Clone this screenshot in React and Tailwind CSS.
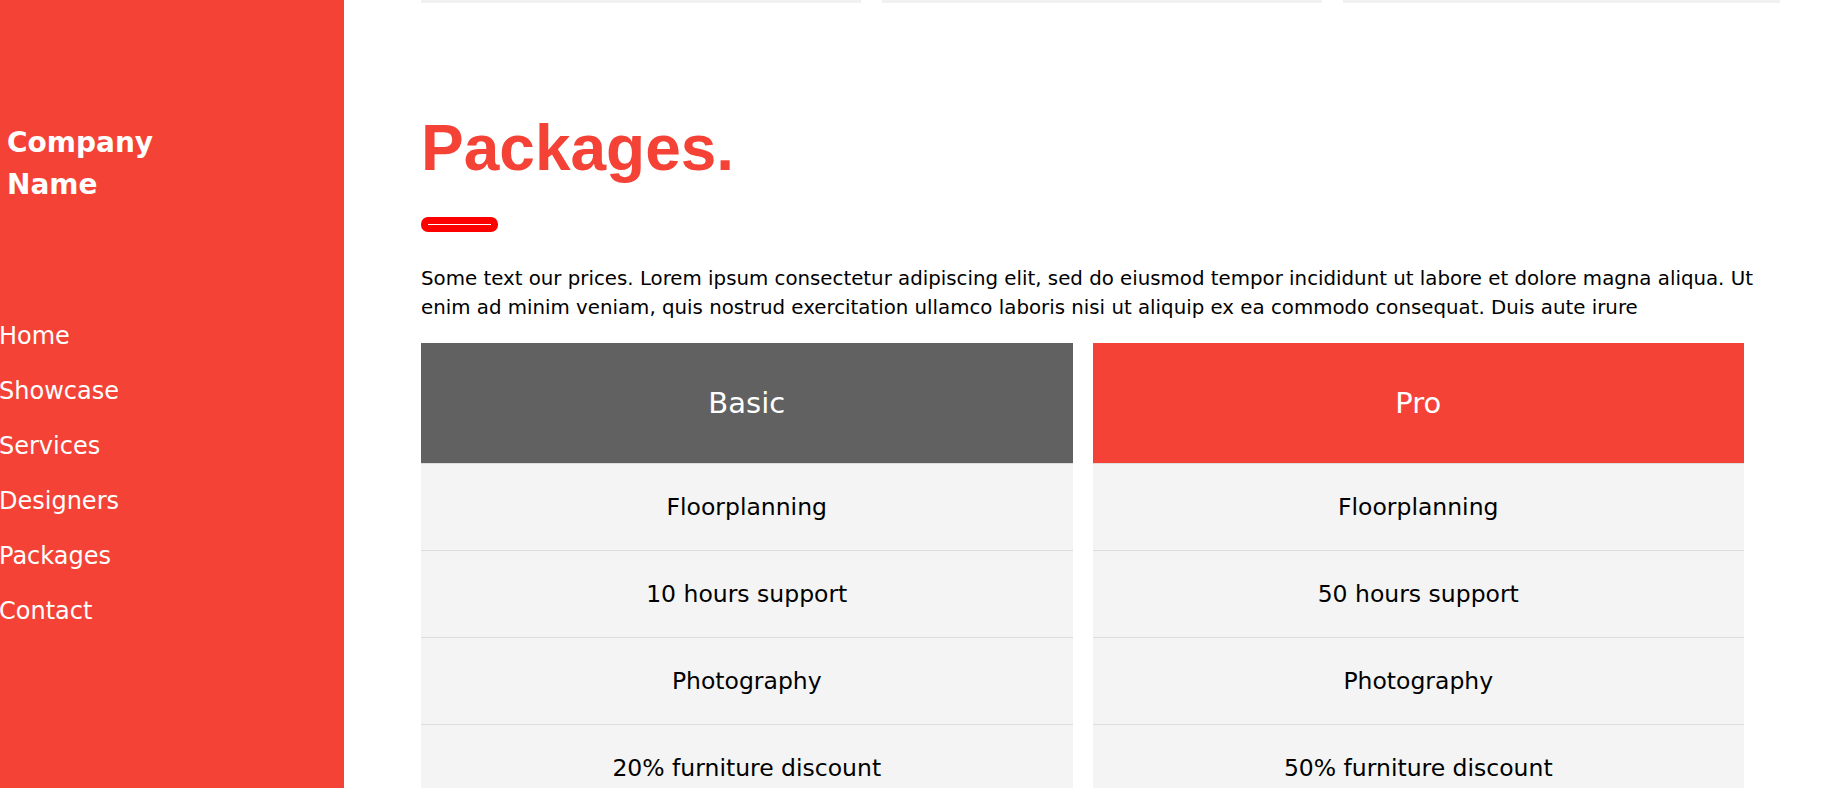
const navItems = ['Home', 'Showcase', 'Services', 'Designers', 'Packages', 'Contact'];

const plans = [
  {
    name: 'Basic',
    head: 'bg-[#616161]',
    rows: ['Floorplanning', '10 hours support', 'Photography', '20% furniture discount', 'Good deals', '$ 199'],
  },
  {
    name: 'Pro',
    head: 'bg-[#f44336]',
    rows: ['Floorplanning', '50 hours support', 'Photography', '50% furniture discount', 'GREAT deals', '$ 249'],
  },
];

export default function App() {
  return (
    <div className="flex h-screen overflow-hidden bg-white font-['DejaVu_Sans',sans-serif] text-black">
      {/* Sidebar */}
      <nav className="w-[344px] shrink-0 bg-[#f44336] text-white">
        <div className="pt-[122px] pl-[7px] text-[28px] font-bold leading-[42px]">
          Company
          <br />
          Name
        </div>
        <ul className="mt-[103px] -ml-[1px]">
          {navItems.map((item) => (
            <li key={item} className="text-[24px] leading-[55px]">
              {item}
            </li>
          ))}
        </ul>
      </nav>

      {/* Main */}
      <main className="flex-1 pl-[77px]">
        <div className="flex gap-[21px]">
          <div className="h-[3px] w-[440px] bg-[#f1f1f1]" />
          <div className="h-[3px] w-[440px] bg-[#f1f1f1]" />
          <div className="h-[3px] w-[437px] bg-[#f1f1f1]" />
        </div>

        <h1 className="mt-[113px] font-['Liberation_Sans',sans-serif] text-[64px] font-bold leading-none text-[#f44336]">
          Packages.
        </h1>
        <div className="mt-[37px] h-[15px] w-[77px] rounded-[7px] border-[7px] border-[#ff0000] bg-white" />

        <p className="mt-[32px] w-[1360px] text-[19.8px] leading-[29px]">
          Some text our prices. Lorem ipsum consectetur adipiscing elit, sed do eiusmod tempor incididunt ut labore et
          dolore magna aliqua. Ut enim ad minim veniam, quis nostrud exercitation ullamco laboris nisi ut aliquip ex ea
          commodo consequat. Duis aute irure
        </p>

        <div className="mt-[21px] grid w-[1323px] grid-cols-2 gap-[20px]">
          {plans.map((plan) => (
            <ul key={plan.name} className="bg-[#f3f4f3] text-center">
              <li
                className={`flex h-[121px] items-center justify-center border-b border-[#dddddd] pt-[2px] text-[29px] text-white ${plan.head}`}
              >
                {plan.name}
              </li>
              {plan.rows.map((row) => (
                <li
                  key={row}
                  className="flex h-[87px] items-center justify-center border-b border-[#dddddd] pt-[1px] text-[23.5px]"
                >
                  {row}
                </li>
              ))}
            </ul>
          ))}
        </div>
      </main>
    </div>
  );
}
